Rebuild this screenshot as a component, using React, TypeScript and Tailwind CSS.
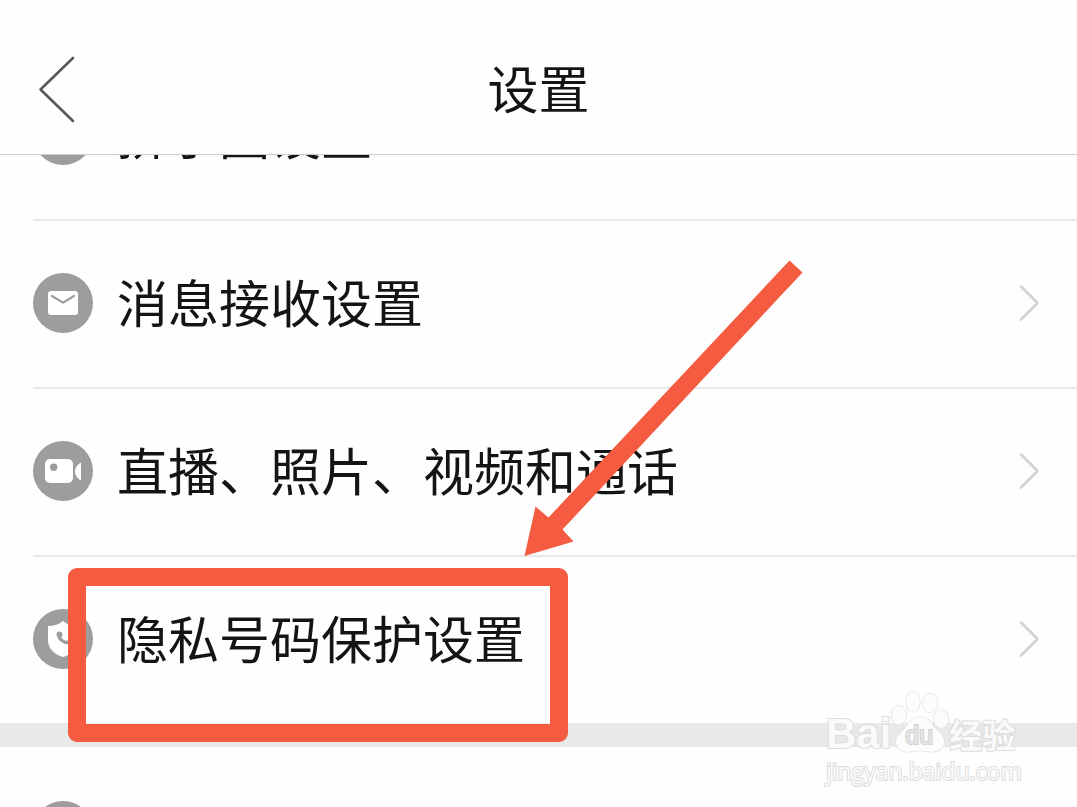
import type { ReactNode } from 'react';

function MailIcon() {
  return (
    <svg viewBox="0 0 60 60" className="size-[60px] shrink-0" aria-hidden="true">
      <circle cx="30" cy="30" r="30" fill="#9d9d9d" />
      <rect x="15" y="18" width="30" height="24" rx="3" fill="#fff" />
      <path d="M19 23 L30 29.6 L41 23" fill="none" stroke="#9d9d9d" strokeWidth="2.200" strokeLinecap="round" strokeLinejoin="round" />
    </svg>
  );
}

function VideoIcon() {
  return (
    <svg viewBox="0 0 60 60" className="size-[60px] shrink-0" aria-hidden="true">
      <circle cx="30" cy="30" r="30" fill="#9d9d9d" />
      <rect x="12" y="18" width="28" height="24" rx="5" fill="#fff" />
      <circle cx="20.7" cy="26.3" r="3.7" fill="#9d9d9d" />
      <path d="M48 21.500 V39.500 C45 38 42 34.500 42 30.500 C42 26.500 45 23 48 21.500 Z" fill="#fff" />
    </svg>
  );
}

function ShieldPhoneIcon() {
  return (
    <svg viewBox="0 0 60 60" className="size-[60px] shrink-0" aria-hidden="true">
      <circle cx="30" cy="30" r="30" fill="#9d9d9d" />
      <path d="M30 12 C34 15.500 39 17 45 17 V31 C45 39.500 38.500 45.500 30 48 C21.500 45.500 15 39.500 15 31 V17 C21 17 26 15.500 30 12 Z" fill="#fff" />
      <path d="M25.800 25.500 C25.500 29.500 30 34 36 33.500" fill="none" stroke="#9d9d9d" strokeWidth="3.200" strokeLinecap="round" />
      <circle cx="26.500" cy="25.500" r="3" fill="#9d9d9d" />
      <circle cx="37" cy="33" r="3" fill="#9d9d9d" />
    </svg>
  );
}

function PlainIcon() {
  return <span className="size-[60px] shrink-0 rounded-full bg-[#9d9d9d]" aria-hidden="true" />;
}

function Chevron() {
  return (
    <svg viewBox="0 0 24 40" className="h-10 w-6 shrink-0" fill="none" stroke="#d3d3d3" strokeWidth="2.700" strokeLinecap="round" strokeLinejoin="round" aria-hidden="true">
      <path d="M4 3.500 L20.500 20 L4 36.500" />
    </svg>
  );
}

interface RowProps {
  icon: ReactNode;
  label?: string;
  divided?: boolean;
  children?: ReactNode;
}

function Row({ icon, label, divided = false, children }: RowProps) {
  return (
    <li className="relative pl-[33px]">
      <a
        href="#"
        aria-label={label ?? '更多设置'}
        className={
          divided
            ? 'flex h-[168px] items-center border-t-2 border-[#e9e9e9] pr-9 pb-[2px]'
            : 'flex h-[168px] items-center pr-9'
        }
      >
        {icon}
        <span className="ml-6 flex-1 pb-1 text-[51px] leading-[60px] whitespace-nowrap">{label}</span>
        <Chevron />
      </a>
      {children}
    </li>
  );
}

function Highlight() {
  return (
    <>
      <div className="pointer-events-none absolute top-[13px] left-[68px] z-10 h-[174px] w-[500px] rounded-[9px] border-[18px] border-[#f45b40]" />
      <svg
        viewBox="0 0 280 298"
        className="pointer-events-none absolute -top-[296px] left-[524px] z-10 h-[298px] w-[280px]"
        aria-hidden="true"
      >
        <path d="M265.500 1.500 L278.500 13.500 L38.500 270.500 L49.500 282.500 L0.500 297 L11.500 247.500 L24.500 258.500 Z" fill="#f45b40" />
      </svg>
    </>
  );
}

function Watermark() {
  return (
    <div className="pointer-events-none absolute right-[57px] bottom-[20px] z-20 w-[194px] text-[#fafafa] [-webkit-text-stroke:2px_#dcdcdc] [paint-order:stroke_fill]">
      <div className="flex h-[63px] items-end">
        <span className="font-['Liberation_Sans',sans-serif] text-[42px] leading-[38px] font-bold">Bai</span>
        <span className="relative h-[63px] w-[58px]">
          <svg viewBox="0 0 58 63" className="absolute inset-0 size-full" fill="#fcfcfc" stroke="#dcdcdc" strokeWidth="1.200" aria-hidden="true">
            <ellipse cx="8" cy="25" rx="7.500" ry="9.500" />
            <ellipse cx="22" cy="11.500" rx="7" ry="10" />
            <ellipse cx="39" cy="13" rx="7.500" ry="9.500" />
            <ellipse cx="50" cy="29" rx="7.500" ry="9" />
            <path d="M29 26.500 C37 26.500 40 33 44 38 C49 43 54 46 53 53 C52 61 45 62.500 38 61.500 C32 60.500 26 60.500 20 61.500 C12 63 5 60 5 52 C5 46 10 43 14 38 C18 33 21 26.500 29 26.500 Z" />
          </svg>
          <span className="absolute bottom-[2px] left-[14px] font-['Liberation_Sans',sans-serif] text-[25px] leading-[32px] text-[#e6e6e6] [-webkit-text-stroke:2px_#cfcfcf]">
            du
          </span>
        </span>
        <span className="text-[33px] leading-[38px] font-bold">经验</span>
      </div>
      <div className="pt-[2px] font-['Open_Sans',sans-serif] text-[23px] leading-[32px] whitespace-nowrap">jingyan.baidu.com</div>
    </div>
  );
}

export default function App() {
  return (
    <div className="relative flex h-screen flex-col overflow-hidden bg-[#fefefe] font-['Noto_Sans_CJK_SC',sans-serif] text-[#141414]">
      <header className="relative z-10 flex h-[155px] shrink-0 items-center justify-center border-b border-[#cccccc] bg-[#fefefe] pt-5">
        <button type="button" aria-label="返回" className="absolute top-[54px] left-[36px]">
          <svg viewBox="0 0 42 70" className="h-[70px] w-[42px]" fill="none" stroke="#585858" strokeWidth="2.600" strokeLinecap="round" strokeLinejoin="round" aria-hidden="true">
            <path d="M37 4 L4.500 35.500 L37 67" />
          </svg>
        </button>
        <h1 className="text-[51px] leading-[60px]">设置</h1>
      </header>
      <main className="min-h-0 flex-1 overflow-hidden">
        <ul className="-mt-[104px]">
          <Row icon={<PlainIcon />} label="拼小圈设置" />
          <Row icon={<MailIcon />} label="消息接收设置" divided />
          <Row icon={<VideoIcon />} label="直播、照片、视频和通话" divided />
          <Row icon={<ShieldPhoneIcon />} label="隐私号码保护设置" divided>
            <Highlight />
          </Row>
        </ul>
        <div className="h-6 bg-[#e9e9e9]" />
        <ul>
          <Row icon={<PlainIcon />} />
        </ul>
      </main>
      <Watermark />
    </div>
  );
}
